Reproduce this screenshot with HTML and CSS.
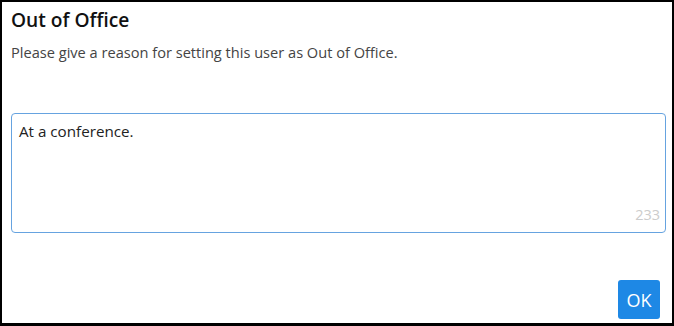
FILE: index.html
```html
<!DOCTYPE html>
<html lang="en">
<head>
    <meta charset="UTF-8">
    <title>Out of Office</title>
    <link rel="stylesheet" href="styles.css">
</head>
<body>
    <div class="dialog">
        <h2 class="title">Out of Office</h2>
        <p class="intro">Please give a reason for setting this user as Out of Office.</p>
        <div class="field">
            <div class="textbox">At a conference.</div>
            <span class="counter">233</span>
        </div>
        <div class="actions">
            <button type="button" class="ok">OK</button>
        </div>
    </div>
</body>
</html>
```

FILE: styles.css
```css
html, body {
    margin: 0;
    padding: 0;
}
body {
    font-family: "Open Sans", "Noto Sans", sans-serif;
    background: white;
}
.dialog {
    box-sizing: border-box;
    width: 674px;
    height: 326px;
    border: 2px solid #000;
    border-bottom-width: 3px;
    padding: 6px 6px 4px 9px;
    display: flex;
    flex-direction: column;
}
.title {
    margin: 0;
    font-size: 19.2px;
    font-weight: 600;
    color: #111;
    line-height: 24px;
}
.intro {
    margin: 10px 0 0;
    font-size: 14.6px;
    color: #444;
    line-height: 20px;
}
.field {
    position: relative;
    margin-top: 51px;
}
.textbox {
    box-sizing: border-box;
    height: 120px;
    border: 1px solid #66a3e0;
    border-radius: 4px;
    padding: 6px 7px;
    font-size: 15.2px;
    color: #222;
    line-height: 22px;
}
.counter {
    position: absolute;
    right: 6px;
    bottom: 9px;
    font-size: 14.5px;
    color: #ccc;
}
.actions {
    margin-top: auto;
    display: flex;
    justify-content: flex-end;
}
.ok {
    width: 42px;
    height: 39px;
    margin-right: 6px;
    border: none;
    border-radius: 3px;
    background: #1e88e5;
    color: white;
    font-family: inherit;
    font-size: 18px;
    padding: 0;
    cursor: pointer;
}
```
